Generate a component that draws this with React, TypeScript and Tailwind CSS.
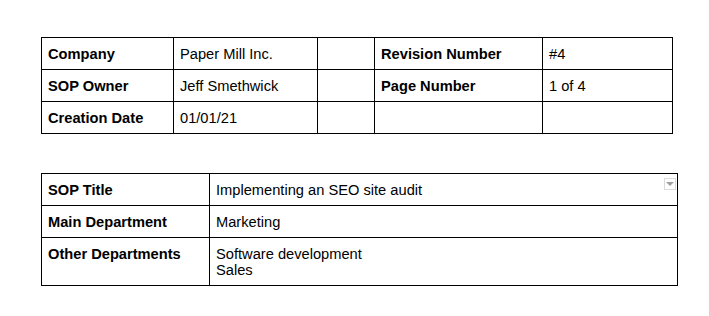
import React from 'react';

const cell = 'border border-black pl-[6px] pr-[6px] pt-[8px] pb-[7px] align-top leading-[16px]';

export default function App() {
  const top = [
    ['Company', 'Paper Mill Inc.', '', 'Revision Number', '#4'],
    ['SOP Owner', 'Jeff Smethwick', '', 'Page Number', '1 of 4'],
    ['Creation Date', '01/01/21', '', '', ''],
  ];

  return (
    <div className="w-[709px] h-[316px] bg-white text-black text-[14.67px] font-['Liberation_Sans',Arial,sans-serif]">
      <div className="pt-[37px] pl-[41px]">
        <table className="table-fixed border-collapse w-[631px]">
          <colgroup>
            <col className="w-[132px]" />
            <col className="w-[144px]" />
            <col className="w-[57px]" />
            <col className="w-[168px]" />
            <col className="w-[130px]" />
          </colgroup>
          <tbody>
            {top.map((row, i) => (
              <tr key={i}>
                {row.map((v, j) => (
                  <td key={j} className={`${cell} ${j === 0 || j === 3 ? 'font-bold' : ''}`}>
                    {v}
                  </td>
                ))}
              </tr>
            ))}
          </tbody>
        </table>

        <table className="table-fixed border-collapse w-[636px] mt-[39px]">
          <colgroup>
            <col className="w-[168px]" />
            <col className="w-[468px]" />
          </colgroup>
          <tbody>
            <tr>
              <td className={`${cell} font-bold`}>SOP Title</td>
              <td className={`${cell} relative`}>
                Implementing an SEO site audit
                <span className="absolute right-[1px] top-[4px] w-[12px] h-[12px] border border-[#dadce0] bg-white flex items-center justify-center">
                  <svg width="8" height="4" viewBox="0 0 8 4">
                    <path d="M0 0h8L4 4z" fill="#a0a0a0" />
                  </svg>
                </span>
              </td>
            </tr>
            <tr>
              <td className={`${cell} font-bold`}>Main Department</td>
              <td className={cell}>Marketing</td>
            </tr>
            <tr>
              <td className={`${cell} font-bold`}>Other Departments</td>
              <td className={cell}>
                Software development
                <br />
                Sales
              </td>
            </tr>
          </tbody>
        </table>
      </div>
    </div>
  );
}
